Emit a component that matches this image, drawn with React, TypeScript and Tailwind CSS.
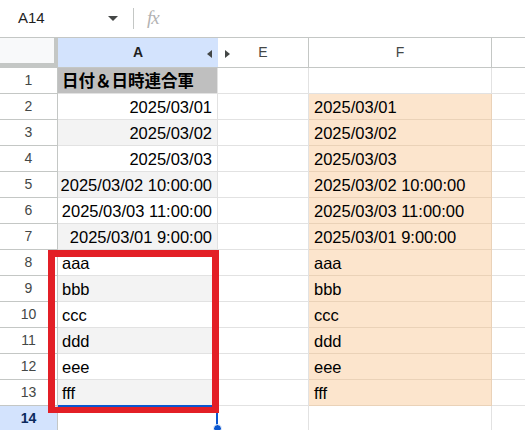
import React from "react";

const FONT = '"Liberation Sans", Arial, "Noto Sans CJK JP", sans-serif';

type Row = { a: string; align: "left" | "right"; f: string };

const rows: Row[] = [
  { a: "2025/03/01", align: "right", f: "2025/03/01" },
  { a: "2025/03/02", align: "right", f: "2025/03/02" },
  { a: "2025/03/03", align: "right", f: "2025/03/03" },
  { a: "2025/03/02 10:00:00", align: "right", f: "2025/03/02 10:00:00" },
  { a: "2025/03/03 11:00:00", align: "right", f: "2025/03/03 11:00:00" },
  { a: "2025/03/01 9:00:00", align: "right", f: "2025/03/01 9:00:00" },
  { a: "aaa", align: "left", f: "aaa" },
  { a: "bbb", align: "left", f: "bbb" },
  { a: "ccc", align: "left", f: "ccc" },
  { a: "ddd", align: "left", f: "ddd" },
  { a: "eee", align: "left", f: "eee" },
  { a: "fff", align: "left", f: "fff" },
];

function RowHead({ n, selected }: { n: number; selected?: boolean }) {
  return (
    <div
      className={
        "h-[26px] flex items-center justify-center border-r border-b border-[#c4c7c5] text-[14px] " +
        (selected ? "bg-[#d3e3fd] font-bold text-[#0b2a5c]" : "bg-white text-[#444746]")
      }
    >
      {n}
    </div>
  );
}

export default function App() {
  return (
    <div className="w-[525px] h-[430px] overflow-hidden bg-white relative" style={{ fontFamily: FONT }}>
      {/* name box + formula bar */}
      <div className="h-[38px] flex items-center border-b border-[#c4c7c5]">
        <div className="w-[133px] flex items-center pl-[18px] pr-[15px] h-full">
          <span className="text-[15px] text-[#1f1f1f]">A14</span>
          <svg className="ml-auto" width="10" height="5" viewBox="0 0 10 5">
            <path d="M0 0 L10 0 L5 5 Z" fill="#444746" />
          </svg>
        </div>
        <div className="w-px h-[21px] bg-[#c4c7c5]" />
        <span
          className="ml-[13px] text-[19px] italic text-[#b3b3b3] tracking-[-1px]"
          style={{ fontFamily: '"Liberation Serif", serif' }}
        >
          fx
        </span>
      </div>

      {/* sheet grid */}
      <div className="grid grid-cols-[58px_160px_91px_183px_1fr]">
        {/* header row */}
        <div className="h-[30px] bg-[#f8f9fa] border-r-[4px] border-b-[5px] border-[#c4c7c5]" />
        <div className="h-[30px] bg-[#d3e3fd] border-b border-[#c4c7c5] flex items-center justify-center relative">
          <span className="text-[14px] font-bold text-[#1f1f1f]">A</span>
          <svg className="absolute right-[6px] top-[12px]" width="5" height="8" viewBox="0 0 5 8">
            <path d="M5 0 L5 8 L0 4 Z" fill="#444746" />
          </svg>
        </div>
        <div className="h-[30px] bg-white border-r border-b border-[#c4c7c5] flex items-center justify-center relative">
          <svg className="absolute left-[7px] top-[12px]" width="5" height="8" viewBox="0 0 5 8">
            <path d="M0 0 L0 8 L5 4 Z" fill="#444746" />
          </svg>
          <span className="text-[14px] text-[#444746]">E</span>
        </div>
        <div className="h-[30px] bg-white border-r border-b border-[#c4c7c5] flex items-center justify-center">
          <span className="text-[14px] text-[#444746]">F</span>
        </div>
        <div className="h-[30px] bg-white border-b border-[#c4c7c5]" />

        {/* row 1 */}
        <RowHead n={1} />
        <div className="h-[26px] bg-[#bfbfbf] border-r border-b border-[#e2e2e2] flex items-center pl-[4px] pt-[1px]">
          <span className="text-[16.5px] font-bold text-black whitespace-nowrap">日付＆日時連合軍</span>
        </div>
        <div className="h-[26px] bg-white border-r border-b border-[#e2e2e2]" />
        <div className="h-[26px] bg-white border-r border-b border-[#e2e2e2]" />
        <div className="h-[26px] bg-white border-b border-[#e2e2e2]" />

        {rows.map((r, i) => {
          const n = i + 2;
          const banded = n % 2 === 1;
          return (
            <React.Fragment key={n}>
              <RowHead n={n} />
              <div
                className={
                  "h-[26px] border-r border-b border-[#e2e2e2] flex items-center pt-[2px] text-[16.5px] text-black whitespace-nowrap " +
                  (banded ? "bg-[#f3f3f3] " : "bg-white ") +
                  (r.align === "right" ? "justify-end pr-[5px]" : "justify-start pl-[4px]")
                }
              >
                {r.a}
              </div>
              <div className="h-[26px] bg-white border-r border-b border-[#e2e2e2]" />
              <div className="h-[26px] bg-[#fce5cd] border-r border-b border-[#ead2b8] flex items-center pt-[2px] pl-[5px] text-[16.5px] text-black whitespace-nowrap">
                {r.f}
              </div>
              <div className="h-[26px] bg-white border-b border-[#e2e2e2]" />
            </React.Fragment>
          );
        })}

        {/* row 14 (active) */}
        <RowHead n={14} selected />
        <div className="h-[27px] bg-white border-t-[2px] border-r-[2px] border-[#0b57d0] -mt-[1px]" />
        <div className="h-[26px] bg-white border-r border-b border-[#e2e2e2]" />
        <div className="h-[26px] bg-white border-r border-b border-[#e2e2e2]" />
        <div className="h-[26px] bg-white border-b border-[#e2e2e2]" />
      </div>

      {/* fill handle of the active cell */}
      <div className="absolute left-[213px] top-[424px] w-[9px] h-[9px] rounded-full bg-[#0b57d0] border border-white" />

      {/* red highlight frame */}
      <div className="absolute left-[48px] top-[250px] w-[171px] h-[163px] border-[7px] border-b-[6px] border-[#e31f26]" />
    </div>
  );
}
